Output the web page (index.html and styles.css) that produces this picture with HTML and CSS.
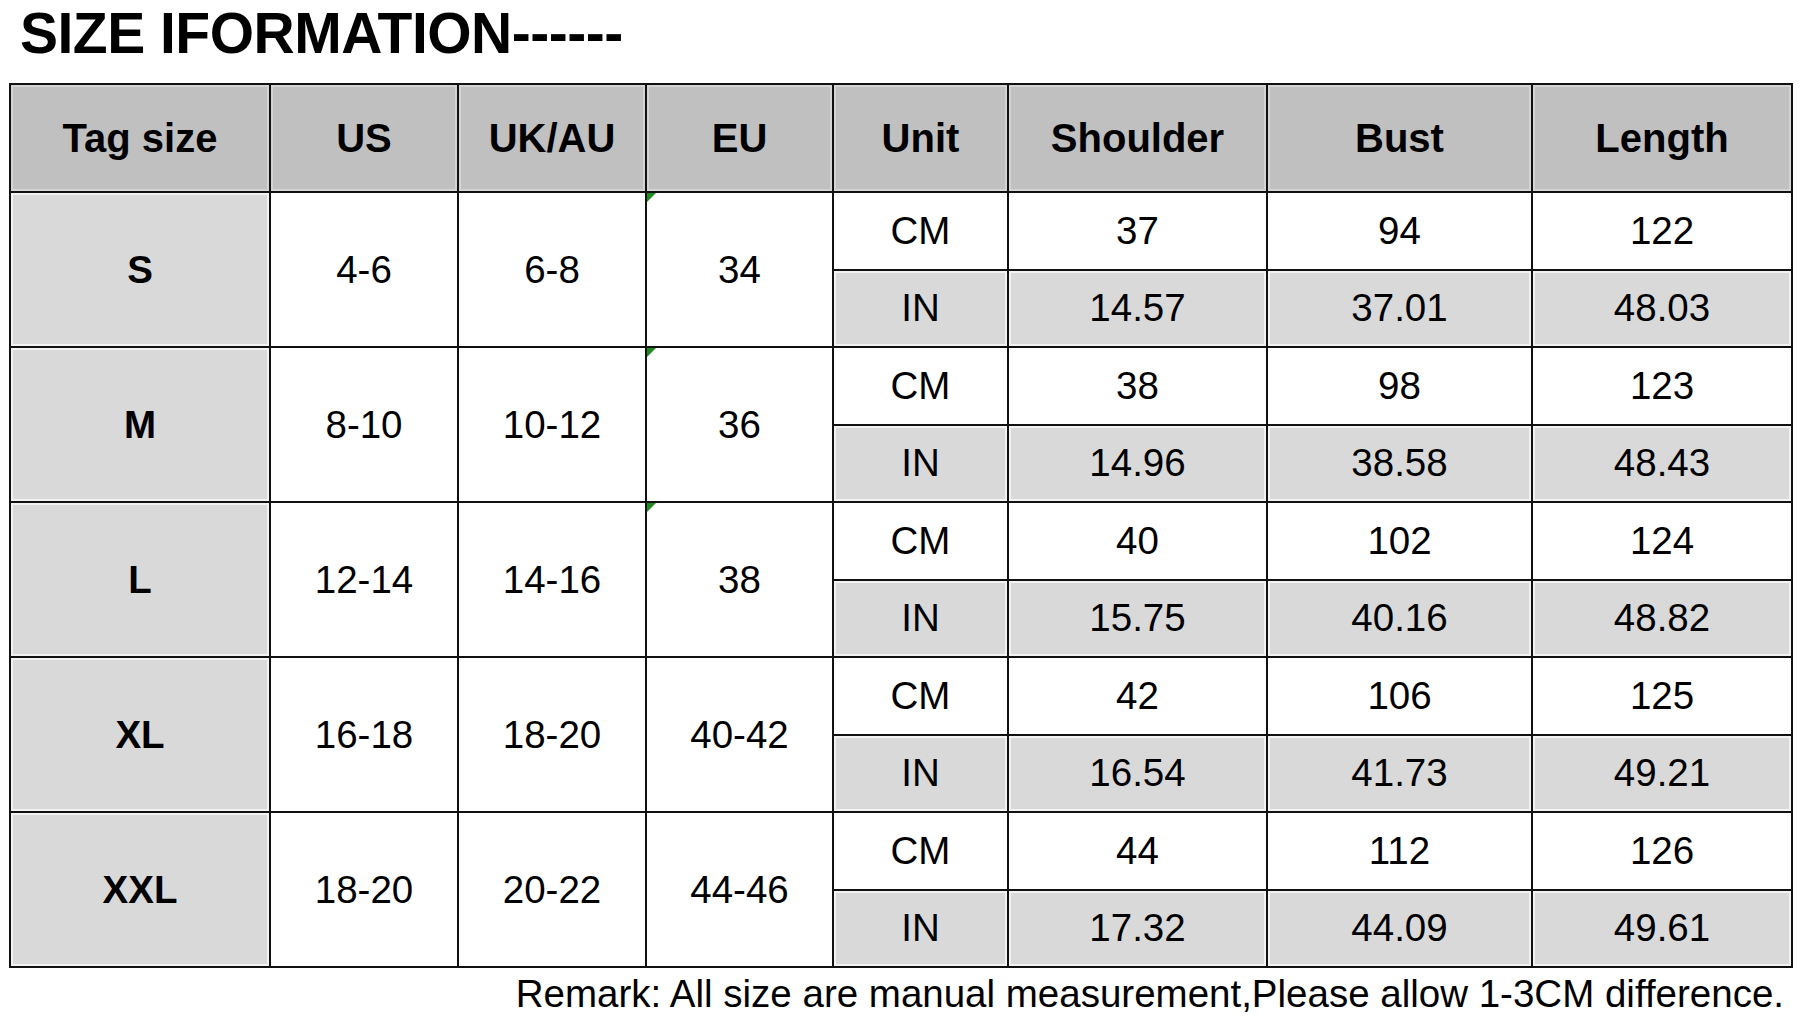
FILE: index.html
```html
<!DOCTYPE html>
<html>
<head>
<meta charset="utf-8">
<link rel="stylesheet" href="styles.css">
</head>
<body>
<div class="page">
  <h1 class="title">SIZE IFORMATION------</h1>
  <table class="size-table">
    <colgroup>
      <col class="c-tag"><col class="c-us"><col class="c-uk"><col class="c-eu"><col class="c-unit"><col class="c-sh"><col class="c-bust"><col class="c-len">
    </colgroup>
    <thead>
      <tr class="head-row">
        <th>Tag size</th><th>US</th><th>UK/AU</th><th>EU</th><th>Unit</th><th>Shoulder</th><th>Bust</th><th>Length</th>
      </tr>
    </thead>
    <tbody>
      <tr class="cm-row">
        <td class="tag" rowspan="2">S</td><td rowspan="2">4-6</td><td rowspan="2">6-8</td><td class="eu flag" rowspan="2">34</td>
        <td>CM</td><td>37</td><td>94</td><td>122</td>
      </tr>
      <tr class="in-row"><td>IN</td><td>14.57</td><td>37.01</td><td>48.03</td></tr>

      <tr class="cm-row">
        <td class="tag" rowspan="2">M</td><td rowspan="2">8-10</td><td rowspan="2">10-12</td><td class="eu flag" rowspan="2">36</td>
        <td>CM</td><td>38</td><td>98</td><td>123</td>
      </tr>
      <tr class="in-row"><td>IN</td><td>14.96</td><td>38.58</td><td>48.43</td></tr>

      <tr class="cm-row">
        <td class="tag" rowspan="2">L</td><td rowspan="2">12-14</td><td rowspan="2">14-16</td><td class="eu flag" rowspan="2">38</td>
        <td>CM</td><td>40</td><td>102</td><td>124</td>
      </tr>
      <tr class="in-row"><td>IN</td><td>15.75</td><td>40.16</td><td>48.82</td></tr>

      <tr class="cm-row">
        <td class="tag" rowspan="2">XL</td><td rowspan="2">16-18</td><td rowspan="2">18-20</td><td class="eu" rowspan="2">40-42</td>
        <td>CM</td><td>42</td><td>106</td><td>125</td>
      </tr>
      <tr class="in-row"><td>IN</td><td>16.54</td><td>41.73</td><td>49.21</td></tr>

      <tr class="cm-row">
        <td class="tag" rowspan="2">XXL</td><td rowspan="2">18-20</td><td rowspan="2">20-22</td><td class="eu" rowspan="2">44-46</td>
        <td>CM</td><td>44</td><td>112</td><td>126</td>
      </tr>
      <tr class="in-row"><td>IN</td><td>17.32</td><td>44.09</td><td>49.61</td></tr>
    </tbody>
  </table>
  <p class="remark">Remark: All size are manual measurement,Please allow 1-3CM difference.</p>
</div>
</body>
</html>
```
FILE: styles.css
```css
html, body {
  margin: 0;
  padding: 0;
  background: #ffffff;
}

.page {
  width: 1800px;
  height: 1020px;
  overflow: hidden;
  font-family: "Liberation Sans", Arial, sans-serif;
  color: #000;
}

.title {
  margin: 3px 0 0 20px;
  font-size: 57px;
  line-height: 60px;
  font-weight: 700;
  letter-spacing: -0.5px;
  height: 60px;
}

.size-table {
  margin: 20px 0 0 9px;
  width: 1782px;
  border-collapse: collapse;
  table-layout: fixed;
  border: 2px solid #111;
}

.c-tag { width: 260px; }
.c-us { width: 188px; }
.c-uk { width: 188px; }
.c-eu { width: 187px; }
.c-unit { width: 175px; }
.c-sh { width: 259px; }
.c-bust { width: 265px; }
.c-len { width: 260px; }

.size-table th,
.size-table td {
  border: 2px solid #111;
  padding: 0;
  text-align: center;
  vertical-align: middle;
}

.size-table th {
  height: 106px;
  background: #c0c0c0;
  font-size: 40px;
  font-weight: 700;
  box-shadow: inset 0 0 0 2px #d4d4d4;
}

.size-table td {
  font-size: 38.5px;
  font-weight: 400;
}

.cm-row td,
.in-row td {
  height: 75.5px;
}

.cm-row td {
  background: #ffffff;
}

.in-row td {
  background: #d9d9d9;
  box-shadow: inset 0 0 0 2px #f2f2f2;
}

.size-table td.tag {
  background: #d9d9d9;
  font-weight: 700;
  box-shadow: inset 0 0 0 2px #f2f2f2;
}

.eu {
  position: relative;
}

.flag::before {
  content: "";
  position: absolute;
  left: 0;
  top: 0;
  width: 0;
  height: 0;
  border-top: 9px solid #1f8a1f;
  border-right: 9px solid transparent;
}

.remark {
  margin: 4px 16px 0 0;
  text-align: right;
  font-size: 38.5px;
  line-height: 44px;
}
```
